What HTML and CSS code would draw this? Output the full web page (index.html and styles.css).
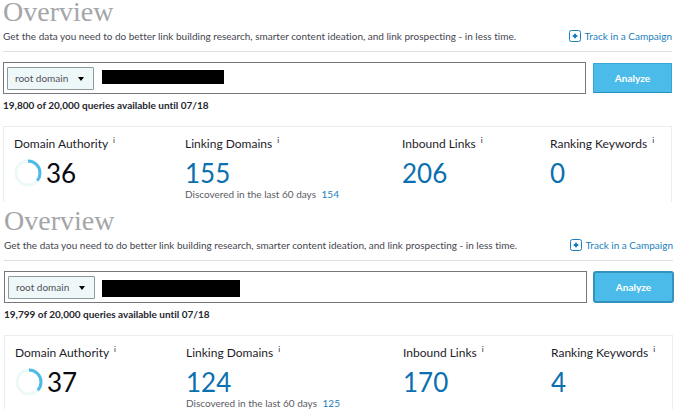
FILE: index.html
```html
<!DOCTYPE html>
<html lang="en">
<head>
<meta charset="utf-8">
<title>Overview</title>
<link rel="stylesheet" href="styles.css">
</head>
<body>
<section class="panel">
  <h1 class="title">Overview</h1>
  <header class="intro">
    <p class="lead">Get the data you need to do better link building research, smarter content ideation, and link prospecting - in less time.</p>
    <a class="track" href="#"><svg class="plus" viewBox="0 0 12 12" aria-hidden="true"><rect x=".5" y=".5" width="11" height="11" rx="2"/><path d="M6 3.7v4.6M3.7 6h4.6"/></svg>Track in a Campaign</a>
  </header>
  <form class="search">
    <div class="field">
      <div class="scope"><select aria-label="Scope"><option>root domain</option></select></div>
      <span class="redacted"></span>
      <input class="query" type="text" aria-label="Domain">
    </div>
    <button class="analyze" type="button">Analyze</button>
  </form>
  <p class="quota">19,800 of 20,000 queries available until 07/18</p>
  <div class="metrics">
    <div class="metric">
      <h2 class="label">Domain Authority <sup>i</sup></h2>
      <div class="value score"><svg class="ring" viewBox="0 0 28 28" aria-hidden="true"><circle class="ring-track" cx="14" cy="14" r="12"/><circle class="ring-fill" cx="14" cy="14" r="12" pathLength="100" stroke-dasharray="36 64" transform="rotate(-90 14 14)"/></svg>36</div>
    </div>
    <div class="metric">
      <h2 class="label">Linking Domains <sup>i</sup></h2>
      <a class="value" href="#">155</a>
      <p class="found">Discovered in the last 60 days <a href="#">154</a></p>
    </div>
    <div class="metric">
      <h2 class="label">Inbound Links <sup>i</sup></h2>
      <a class="value" href="#">206</a>
    </div>
    <div class="metric">
      <h2 class="label">Ranking Keywords <sup>i</sup></h2>
      <a class="value" href="#">0</a>
    </div>
  </div>
</section>
<section class="panel panel-second">
  <h1 class="title">Overview</h1>
  <header class="intro">
    <p class="lead">Get the data you need to do better link building research, smarter content ideation, and link prospecting - in less time.</p>
    <a class="track" href="#"><svg class="plus" viewBox="0 0 12 12" aria-hidden="true"><rect x=".5" y=".5" width="11" height="11" rx="2"/><path d="M6 3.7v4.6M3.7 6h4.6"/></svg>Track in a Campaign</a>
  </header>
  <form class="search">
    <div class="field">
      <div class="scope"><select aria-label="Scope"><option>root domain</option></select></div>
      <span class="redacted redacted-long"></span>
      <input class="query" type="text" aria-label="Domain">
    </div>
    <button class="analyze analyze-focused" type="button">Analyze</button>
  </form>
  <p class="quota">19,799 of 20,000 queries available until 07/18</p>
  <div class="metrics">
    <div class="metric">
      <h2 class="label">Domain Authority <sup>i</sup></h2>
      <div class="value score"><svg class="ring" viewBox="0 0 28 28" aria-hidden="true"><circle class="ring-track" cx="14" cy="14" r="12"/><circle class="ring-fill" cx="14" cy="14" r="12" pathLength="100" stroke-dasharray="37 63" transform="rotate(-90 14 14)"/></svg>37</div>
    </div>
    <div class="metric">
      <h2 class="label">Linking Domains <sup>i</sup></h2>
      <a class="value" href="#">124</a>
      <p class="found">Discovered in the last 60 days <a href="#">125</a></p>
    </div>
    <div class="metric">
      <h2 class="label">Inbound Links <sup>i</sup></h2>
      <a class="value" href="#">170</a>
    </div>
    <div class="metric">
      <h2 class="label">Ranking Keywords <sup>i</sup></h2>
      <a class="value" href="#">4</a>
    </div>
  </div>
</section>
</body>
</html>
```
FILE: styles.css
```css
* { box-sizing: border-box; }

body {
  margin: 0;
  background: #fff;
  color: #1d1d2b;
  font: 10px/16px Lato, "Open Sans", sans-serif;
  font-variant-ligatures: none;
}

h1, h2, p { margin: 0; font-weight: 400; }
a { color: #1b7fbd; text-decoration: none; }

.panel { padding: 0 8px 0 3px; }
.panel-second { padding: 7px 7px 0 4px; }

.title {
  color: #a3a6a9;
  font: 28px/24px "Roboto Slab", "Liberation Serif", serif;
}

.intro {
  display: flex;
  justify-content: space-between;
  align-items: center;
  padding: 4px 0 7px;
  border-bottom: 1px solid #d8e0e2;
}
.lead { color: #45454f; }

.track { display: flex; align-items: center; gap: 4px; }
.plus { width: 12px; height: 12px; fill: none; stroke: #1b7fbd; }
.plus path { stroke-width: 2; }

.search {
  display: flex;
  align-items: center;
  gap: 7px;
  margin: 10px 0 3px;
}
.field {
  flex: 1;
  min-width: 0;
  display: flex;
  align-items: center;
  height: 32px;
  padding: 0 3px;
  border: 1px solid #77777b;
}
.scope { position: relative; flex: none; }
.scope::after {
  content: "";
  position: absolute;
  right: 10px;
  top: 10px;
  border: solid transparent;
  border-width: 4px 3px 0;
  border-top-color: #000;
  pointer-events: none;
}
select {
  appearance: none;
  display: block;
  width: 87px;
  height: 23px;
  padding: 0 7px;
  border: 1px solid #8d999b;
  border-radius: 1px;
  background: #eff8f8;
  color: #50505a;
  font: inherit;
}
.redacted {
  flex: none;
  width: 122px;
  height: 14px;
  margin: 0 0 3px 8px;
  background: #000;
}
.redacted-long { width: 138px; height: 17px; margin: 3px 0 0 7px; }
.query {
  flex: 1;
  min-width: 0;
  border: 0;
  outline: 0;
  background: transparent;
  font: inherit;
}
.analyze {
  width: 79px;
  height: 30px;
  padding: 0;
  border: 1px solid #39a6d3;
  border-bottom-color: #278fbd;
  border-radius: 1px;
  background: #4bbbea;
  color: #fff;
  font: 700 10px/16px Lato, sans-serif;
}
.analyze-focused {
  border-color: #3492bd;
  box-shadow: 0 0 0 1px #3492bd;
  border-radius: 2px;
}

.quota { color: #25252d; font-weight: 700; }

.metrics {
  display: grid;
  grid-template-columns: 171fr 217fr 148fr 121fr;
  margin-top: 13px;
  padding: 8px 0 2px 10px;
  border: 1px solid #e8eeef;
  border-bottom: 0;
}
.panel-second .metrics { padding-bottom: 0; }
.metric { white-space: nowrap; }
.label { font-size: 12px; line-height: 18px; }
.label sup { margin-left: 2px; font-size: 8px; line-height: 0; }
.value { display: block; font-size: 26px; line-height: 40px; color: #0a70af; }
.score { display: flex; align-items: center; gap: 4px; color: #090910; }
.ring { width: 28px; height: 28px; fill: none; stroke-width: 3; }
.ring-track { stroke: #edf8f8; }
.ring-fill { stroke: #4bbbea; }
.found { margin-top: -5px; color: #5b5b63; line-height: 12px; }
.found a { margin-left: 3px; }
```
